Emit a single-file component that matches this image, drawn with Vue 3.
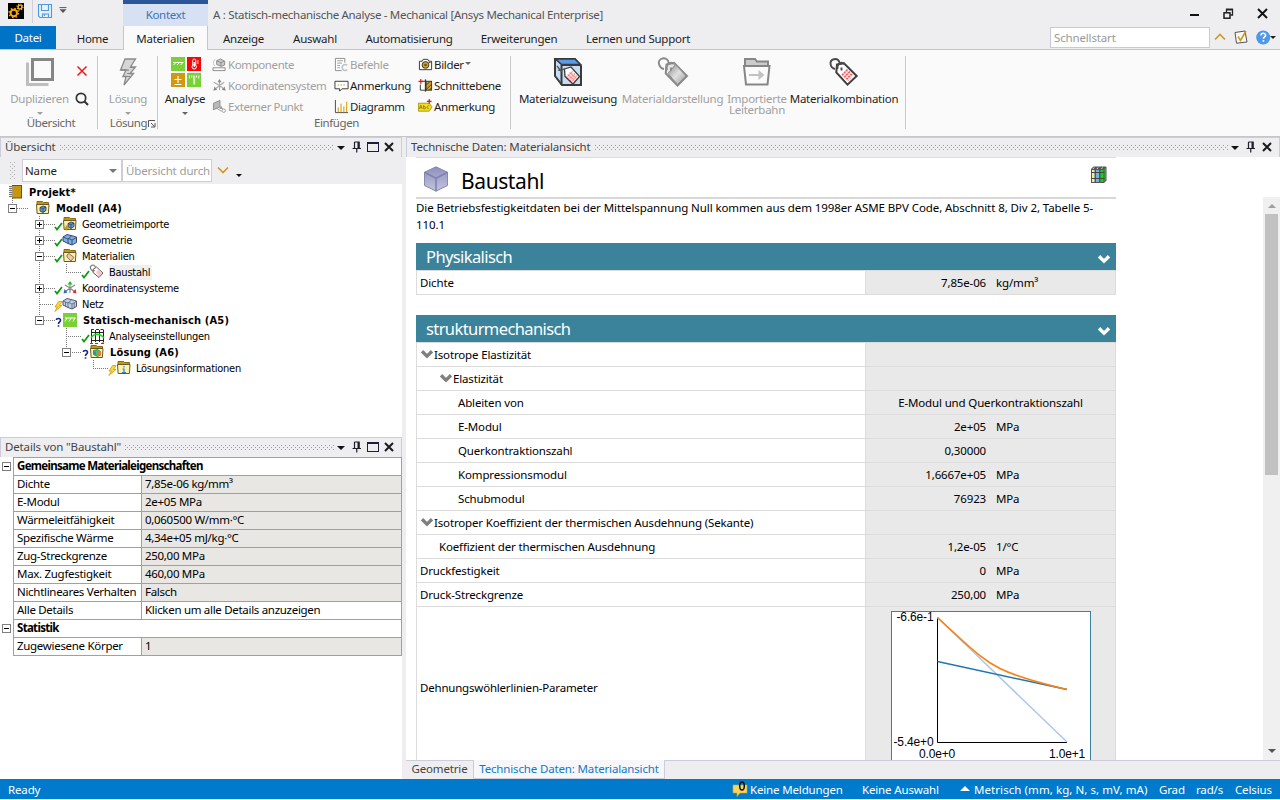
<script setup>
const ribbonTabs = [
  { text: 'Home', cls: 't-home' },
  { text: 'Materialien', cls: 't-mat' },
  { text: 'Anzeige', cls: 't-anz' },
  { text: 'Auswahl', cls: 't-aus' },
  { text: 'Automatisierung', cls: 't-auto' },
  { text: 'Erweiterungen', cls: 't-erw' },
  { text: 'Lernen und Support', cls: 't-ler' },
]

const insertColumns = [
  {
    cls: 'c1',
    items: [
      { text: 'Komponente', icon: 'i-comp', off: true },
      { text: 'Koordinatensystem', icon: 'i-axes-grey', off: true },
      { text: 'Externer Punkt', icon: 'i-point', off: true },
    ],
  },
  {
    cls: 'c2',
    items: [
      { text: 'Befehle', icon: 'i-cmd', off: true },
      { text: 'Anmerkung', icon: 'i-note' },
      { text: 'Diagramm', icon: 'i-chart' },
    ],
  },
  {
    cls: 'c3',
    items: [
      { text: 'Bilder', icon: 'i-cam', arrow: true },
      { text: 'Schnittebene', icon: 'i-section' },
      { text: 'Anmerkung', icon: 'i-label' },
    ],
  },
]

const materialButtons = [
  { text: 'Materialzuweisung', icon: 'i-assign', cls: 'm1' },
  { text: 'Materialdarstellung', icon: 'i-tag-grey', off: true, cls: 'm2' },
  { text: 'Importierte\nLeiterbahn', icon: 'i-import', off: true, cls: 'm3' },
  { text: 'Materialkombination', icon: 'i-tag', cls: 'm4' },
]

const tree = [
  { text: 'Projekt*', level: 0, icon: 'i-project', bold: true },
  { text: 'Modell (A4)', level: 1, box: '-', icon: 'i-f-model', bold: true },
  { text: 'Geometrieimporte', level: 2, box: '+', status: 's-check', icon: 'i-f-import' },
  { text: 'Geometrie', level: 2, box: '+', status: 's-check', icon: 'i-geom' },
  { text: 'Materialien', level: 2, box: '-', status: 's-check', icon: 'i-f-mat' },
  { text: 'Baustahl', level: 3, status: 's-check', icon: 'i-pinktag', selected: true },
  { text: 'Koordinatensysteme', level: 2, box: '+', status: 's-check', icon: 'i-axes' },
  { text: 'Netz', level: 2, status: 's-bolt', icon: 'i-mesh' },
  { text: 'Statisch-mechanisch (A5)', level: 2, box: '-', status: 's-quest', icon: 'i-static', bold: true },
  { text: 'Analyseeinstellungen', level: 3, status: 's-check', icon: 'i-settings' },
  { text: 'Lösung (A6)', level: 3, box: '-', status: 's-quest', icon: 'i-f-sol', bold: true },
  { text: 'Lösungsinformationen', level: 4, status: 's-bolt', icon: 'i-f-info' },
]

const details = [
  { head: 'Gemeinsame Materialeigenschaften' },
  { name: 'Dichte', value: '7,85e-06 kg/mm³' },
  { name: 'E-Modul', value: '2e+05 MPa' },
  { name: 'Wärmeleitfähigkeit', value: '0,060500 W/mm·°C' },
  { name: 'Spezifische Wärme', value: '4,34e+05 mJ/kg·°C' },
  { name: 'Zug-Streckgrenze', value: '250,00 MPa' },
  { name: 'Max. Zugfestigkeit', value: '460,00 MPa' },
  { name: 'Nichtlineares Verhalten', value: 'Falsch' },
  { name: 'Alle Details', value: 'Klicken um alle Details anzuzeigen', editable: true },
  { head: 'Statistik' },
  { name: 'Zugewiesene Körper', value: '1' },
]

const props = [
  { name: 'Isotrope Elastizität', d: 0, open: true },
  { name: 'Elastizität', d: 1, open: true },
  { name: 'Ableiten von', d: 2, full: 'E-Modul und Querkontraktionszahl' },
  { name: 'E-Modul', d: 2, num: '2e+05', unit: 'MPa' },
  { name: 'Querkontraktionszahl', d: 2, num: '0,30000' },
  { name: 'Kompressionsmodul', d: 2, num: '1,6667e+05', unit: 'MPa' },
  { name: 'Schubmodul', d: 2, num: '76923', unit: 'MPa' },
  { name: 'Isotroper Koeffizient der thermischen Ausdehnung (Sekante)', d: 0, open: true },
  { name: 'Koeffizient der thermischen Ausdehnung', d: 1, num: '1,2e-05', unit: '1/°C' },
  { name: 'Druckfestigkeit', d: 0, num: '0', unit: 'MPa' },
  { name: 'Druck-Streckgrenze', d: 0, num: '250,00', unit: 'MPa' },
]
</script>

<template>
  <div class="app">
    <svg class="defs" width="0" height="0">
      <defs>
        <linearGradient id="g-cube" x1="0" y1="0" x2="0" y2="1">
          <stop offset="0" stop-color="#8d90bd" /><stop offset="1" stop-color="#c3c5dc" />
        </linearGradient>
        <linearGradient id="g-grey" x1="0" y1="0" x2="1" y2="1">
          <stop offset="0" stop-color="#8a8a8a" /><stop offset="0.5" stop-color="#e0e0e0" /><stop offset="1" stop-color="#999" />
        </linearGradient>
        <symbol id="folder" viewBox="0 0 16 16">
          <path d="M2 5V1.500h5.500l1 1H13.500V5z" fill="#c8960c" stroke="#8a6a10" />
          <path d="M1.500 4.500h12.500l-.6 9H2.100z" fill="#fbf3a8" stroke="#6b5a20" />
        </symbol>
        <symbol id="cube-s" viewBox="0 0 8 8">
          <path d="M1 2.500l3-1.500 3 1v3.500l-3 2-3-1.500z" fill="#5b9be8" stroke="#333" stroke-width=".8" />
          <path d="M1 2.500l3 1 3-1.500M4 3.500v4" fill="none" stroke="#333" stroke-width=".7" />
        </symbol>
        <symbol id="i-project" viewBox="0 0 16 16">
          <rect x="4.500" y="1.500" width="9" height="12.500" fill="#c8960c" stroke="#6b5410" />
          <rect x="1.500" y="2" width="3" height="11.500" fill="#ddd" />
          <path d="M1 2.500h3M1 4.500h3M1 6.500h3M1 8.500h3M1 10.500h3M1 12.500h3" stroke="#777" stroke-width="1" />
        </symbol>
        <symbol id="i-f-model" viewBox="0 0 16 16"><use href="#folder" /><use href="#cube-s" x="4" y="5" width="8" height="8" /></symbol>
        <symbol id="i-f-import" viewBox="0 0 16 16"><use href="#folder" /><use href="#cube-s" x="5" y="5" width="8" height="8" /><path d="M2 12h5M4.500 9.500v5" stroke="#c8960c" stroke-width="1.500" /></symbol>
        <symbol id="i-geom" viewBox="0 0 16 16">
          <path d="M1 5l4-2.500 4 1L14.500 5v5.500L10 13l-4-1.500L1 9z" fill="#79aef0" stroke="#3a4a60" />
          <path d="M1 5l5 2 3.500-3M6 7v4.500M6.500 6.500l3.500 1.500 4.500-2.500M10 8v5" fill="none" stroke="#3a4a60" stroke-width=".9" />
        </symbol>
        <symbol id="i-mesh" viewBox="0 0 16 16">
          <path d="M1 5l4-2.500 4 1L14.500 5v5.500L10 13l-4-1.500L1 9z" fill="#b9d0ea" stroke="#556" />
          <path d="M1 5l5 2 3.500-3M6 7v4.500M6.500 6.500l3.500 1.500 4.500-2.500M10 8v5M3.500 6v4M12.200 7v4.800" fill="none" stroke="#556" stroke-width=".7" />
        </symbol>
        <symbol id="i-f-mat" viewBox="0 0 16 16"><use href="#folder" /><path d="M5 7l2-1.500 5 4-3 3.500-4-4z" fill="#f5c9a0" stroke="#7a6a60" stroke-width=".9" /></symbol>
        <symbol id="i-pinktag" viewBox="0 0 16 16">
          <path d="M4 5.500l3.500-2.500 6.500 6-4 4.500-6-5z" fill="#fff" stroke="#555" />
          <path d="M7 8l3-2.500 3.500 3.500-3.500 3.500z" fill="#f8c4c4" />
          <path d="M6 6.500C3 8 0 4 2 2s4-.5 4.500 1.500" fill="none" stroke="#777" stroke-width="1.100" />
        </symbol>
        <symbol id="i-axes" viewBox="0 0 16 16">
          <path d="M8 8V3M8 8l5 4M8 8l-5 4M8 8l5-3M8 8L3 5M8 8v5" stroke="#888" stroke-width="1.200" />
          <path d="M5.500 4.500L8 1l2.500 3.500z" fill="#12c912" /><path d="M14.500 13.500l-1-4.500-3 3.500z" fill="#e22" /><path d="M1.500 13.500l1-4.500 3 3.500z" fill="#36c" />
        </symbol>
        <symbol id="i-axes-grey" viewBox="0 0 16 16">
          <path d="M8 8V3M8 8l5 4M8 8l-5 4M8 8l5-3.500M8 8L2 4.500M8 8v5" stroke="#aaa" stroke-width="1.200" />
          <path d="M5.800 4.500L8 1l2.200 3.500zM14.500 13.500l-1-4.500-3 3.500zM1.500 13.500l1-4.500 3 3.500z" fill="#8a8a8a" />
        </symbol>
        <symbol id="i-static" viewBox="0 0 16 16">
          <rect x="1" y="1" width="14" height="14" fill="#7ad137" />
          <path d="M3 6h10.500M3 9.500l2-3.500M7 9.500l2-3.500M11 9.500l2-3.500" stroke="#fff" stroke-width="1" fill="none" />
        </symbol>
        <symbol id="i-settings" viewBox="0 0 16 16">
          <path d="M2.500 2v12M6.500 2v12M10.500 2v12M14.500 2v12M2 4.500h13M2 12.500h13" stroke="#222" stroke-width="1" />
          <path d="M2 10c3-5 9-5 13 0" fill="none" stroke="#1d1" stroke-width="1.300" />
          <path d="M2 1.500h3M7 1.500h3M11.500 1.500h3" stroke="#22d" /><path d="M1 15.500h3M6 15.500h3M12 15.500h3M2.500 14v2M14 14v2" stroke="#e11" />
        </symbol>
        <symbol id="i-f-sol" viewBox="0 0 16 16"><use href="#folder" /><path d="M4.500 6.500l4-1 3 2v3.500l-3 1.500-4-2z" fill="#3c6" stroke="#364" stroke-width=".7" /><path d="M9 7l3 .5v3.500L9 12z" fill="#e73" /><path d="M5 7l2 1v3L5 10z" fill="#38d" /></symbol>
        <symbol id="i-f-info" viewBox="0 0 16 16"><use href="#folder" /><path d="M8 6v1.500M6.500 9H8v3.500M6 12.500h4" stroke="#2b7fd8" stroke-width="1.200" fill="none" /></symbol>
        <symbol id="s-check" viewBox="0 0 9 9"><path d="M1 5l2 2.500L8 1" fill="none" stroke="#0b9a0b" stroke-width="1.700" /></symbol>
        <symbol id="s-bolt" viewBox="0 0 9 11"><path d="M4.500.5L1 6h2.500L.8 10.500 8 4.500H5.500L8 .5z" fill="#ffd83a" stroke="#c99a10" stroke-width=".8" /></symbol>
        <symbol id="s-quest" viewBox="0 0 9 11"><path d="M2.300 3C2.500 1 6.500 1 6.500 3.300 6.500 5 4.500 4.800 4.500 7M4.500 8.300v1.500" fill="none" stroke="#112a8c" stroke-width="1.600" /></symbol>

        <symbol id="i-comp" viewBox="0 0 16 16">
          <path d="M1 11.500h13v3H1z" fill="#fff" stroke="#8a8a8a" /><path d="M5 4l4-2 4.500 2.500v4L10 10 5 8z" fill="#ccc" stroke="#8a8a8a" /><path d="M5 4l4.500 2 4-1.500M9.500 6v4" fill="none" stroke="#8a8a8a" /><path d="M3.500 2.500C1 4 1 8 3 9.500" fill="none" stroke="#aaa" stroke-dasharray="2 1" />
        </symbol>
        <symbol id="i-point" viewBox="0 0 16 16">
          <path d="M1.500 4.500l7-3v7l-7 3z" fill="#b9b9b9" stroke="#8a8a8a" /><path d="M5 10c2 1 3 2 5 3" stroke="#999" fill="none" /><path d="M9.500 7l2.500 4-4-.5z" fill="#999" /><circle cx="12.500" cy="12.500" r="1.800" fill="#fff" stroke="#999" />
        </symbol>
        <symbol id="i-cmd" viewBox="0 0 16 16">
          <path d="M8 14.500H1.500v-13h10V6" fill="#fff" stroke="#8a8a8a" /><path d="M3.500 4h6M3.500 6.500h5M3.500 9h3M3.500 11.500h3" stroke="#999" /><path d="M14 8.800c-2-1.500-5.300-.8-5.300 2.400s3.500 4 5.300 2.200" fill="none" stroke="#c2c2c2" stroke-width="1.800" />
        </symbol>
        <symbol id="i-note" viewBox="0 0 16 16"><path d="M1 3.500h14v8H8.500L6 14v-2.500H1z" fill="#fff" stroke="#333" /><path d="M4 7.500h1.500M7 7.500h1.500M10 7.500h1.500" stroke="#c8960c" /></symbol>
        <symbol id="i-chart" viewBox="0 0 16 16"><path d="M1.500 1v13.500H15" fill="none" stroke="#444" /><path d="M4.500 9v5M7.500 5v9M10.500 8v6M13.500 3v11" stroke="#d9a414" stroke-width="1.200" /></symbol>
        <symbol id="i-cam" viewBox="0 0 16 16"><path d="M1.500 4.500h3l1-2h5l1 2h3v9h-13z" fill="#fff" stroke="#333" /><circle cx="8" cy="8.500" r="3.600" fill="#d9a21b" stroke="#333" /><circle cx="8" cy="8.500" r="1.400" fill="#6b5410" /><path d="M11.500 6h2" stroke="#333" /></symbol>
        <symbol id="i-section" viewBox="0 0 16 16"><path d="M4 3.500h4v9.500H2.500V7" fill="#fff" stroke="#333" /><rect x="8.500" y="3.500" width="6" height="9.500" fill="#d9a21b" stroke="#333" /><path d="M8.500 8l4.500-4.500M8.500 12.500l6-6M12 13l2.500-2.500" stroke="#333" stroke-width="1" /><path d="M8 1.500v13" stroke="#333" stroke-width="1.400" /><path d="M.5 3.500h5M3 1v5" stroke="#e11" stroke-width="1.300" /></symbol>
        <symbol id="i-label" viewBox="0 0 16 16"><path d="M.5 4.500H12l3 4-3 4.500H.5z" fill="#f3dc22" stroke="#b09a10" /><path d="M1.500 10.500L3 6.500l1.500 4M2 9.300h2M6 6.500v4h1.500a1.200 1.200 0 000-2.300H6M12 7.500c-2.500-1-3 3-.5 3" fill="none" stroke="#8a7a10" stroke-width=".9" /><path d="M9.500 2.500h5M12 0v5" stroke="#e11" stroke-width="1.300" /></symbol>
        <symbol id="i-assign" viewBox="0 0 32 32">
          <path d="M3 3h20l6 7v19H10L3 20z" fill="#c6ddfa" stroke="#3a3a3a" stroke-width="2" />
          <path d="M3.500 3h19.500l5.500 5.500H9.500z" fill="#5b9be8" stroke="#3a3a3a" stroke-width="1.600" />
          <path d="M9.500 9h19M9.500 9v20" stroke="#3a3a3a" stroke-width="2" />
          <path d="M12.500 13l6.500-2 8.500 9.500-6.500 7.500-8-7.500z" fill="#fff" stroke="#3a3a3a" stroke-width="1.300" />
          <path d="M14.500 20l5-5 6 6-5 5.500z" fill="#fbd4d4" /><path d="M16 18.500l6 6M18 16.500l6 6M14.500 20.500l5.500 5.500M20.500 15.500l-5.500 5.500M23 17.500l-6 6M25 19.500l-5.500 6" stroke="#ee5a5a" stroke-dasharray="1.400 1.200" stroke-width="1" />
          <path d="M5 10l5 6M6 14c3 1 5-1 7-1" fill="none" stroke="#555" stroke-width="1.300" />
        </symbol>
        <symbol id="i-tag" viewBox="0 0 32 32">
          <path d="M9 8.500L16 7.300 28.700 20l-9.200 8.700L8.300 16.500z" fill="#fff" stroke="#3e3e3e" stroke-width="2" />
          <path d="M13 19l6-6.500 6.500 7-6 6z" fill="#fde0e0" /><path d="M14 18l6.500 6.500M16 16l6.500 6.500M18 14l6 6M19.500 13.500l-5.500 6M22 15.500l-6 6M24 18l-6 6" stroke="#ee5a5a" stroke-dasharray="1.700 1.200" stroke-width="1.200" />
          <path d="M7 13C2 12 1 5 5 3.500c4-1.500 7 1 6.500 4.500M9.500 13c-1-5 4-8 7-5M13.500 11.500v3" fill="none" stroke="#4a4a4a" stroke-width="1.900" />
        </symbol>
        <symbol id="i-tag-grey" viewBox="0 0 32 32">
          <path d="M9.500 8.500L17 6.800 30 20l-9.500 9.500L8.700 17.500z" fill="#e6e6e6" stroke="#8a8a8a" stroke-width="2" />
          <path d="M11 17.500l7.500-9L29 20l-8.500 8.500z" fill="url(#g-grey)" stroke="#8a8a8a" stroke-width="1" />
          <path d="M7 13C2 12 0 5 4 3c4-2 8 .5 7.500 4.500M10 14c-2-6 4-9 7-6M14 11.500v3" fill="none" stroke="#8a8a8a" stroke-width="1.900" />
        </symbol>
        <symbol id="i-import" viewBox="0 0 32 32">
          <path d="M4 10V3h10l2 2.500h11V10z" fill="#cbcbcb" stroke="#868686" stroke-width="2" />
          <path d="M3 10h25.500l-2 18.500H5z" fill="#fbfbfb" stroke="#868686" stroke-width="2" />
          <path d="M8 18h9.500v-4l6 5-6 5v-4H8z" fill="#c2c2c2" />
        </symbol>
        <symbol id="chev" viewBox="0 0 12 9"><path d="M1.500 2L6 6.500 10.500 2" fill="none" stroke="currentColor" stroke-width="3" /></symbol>
        <symbol id="pin" viewBox="0 0 10 12"><path d="M2.500 1h4.500v6M2.500 1v6M.5 7.500h8.500M4.750 7.500V11.500" fill="none" stroke="#1e1e2c" stroke-width="1.200" /><path d="M6.500 1v6.500" stroke="#1e1e2c" stroke-width="2" /></symbol>
        <symbol id="closex" viewBox="0 0 10 10"><path d="M1 1l8 8M9 1L1 9" stroke="#1a1a1a" stroke-width="2" /></symbol>
      </defs>
    </svg>

    <!-- title bar -->
    <header class="titlebar">
      <div class="quick">
        <svg class="logo" width="16" height="16" viewBox="0 0 16 16">
          <rect width="16" height="16" fill="#000" />
          <circle cx="5.800" cy="10" r="3.200" fill="none" stroke="#f7a800" stroke-width="2" />
          <circle cx="5.800" cy="10" r="4.700" fill="none" stroke="#f7a800" stroke-width="1.400" stroke-dasharray="1.600 2.090" />
          <circle cx="12" cy="4" r="1.900" fill="none" stroke="#f7b030" stroke-width="1.400" />
          <circle cx="12" cy="4" r="3" fill="none" stroke="#f7b030" stroke-width="1.100" stroke-dasharray="1.200 1.160" />
        </svg>
        <i class="qsep"></i>
        <svg width="14" height="14" viewBox="0 0 14 14"><path d="M.5.500h13v13H2l-1.500-1.500zM3.500.500v6h7v-6M4.500 13.500v-3.500h6v3.500M6.500 10v2" fill="none" stroke="#4a9be8" stroke-width="1.100" /></svg>
        <svg class="qarrow" width="8" height="6" viewBox="0 0 8 6"><path d="M.5.600h7" stroke="#555" /><path d="M.5 2.200h7L4 6z" fill="#555" /></svg>
      </div>
      <div class="context">Kontext</div>
      <div class="title">A : Statisch-mechanische Analyse - Mechanical [Ansys Mechanical Enterprise]</div>
      <div class="winctl">
        <svg width="10" height="12" viewBox="0 0 10 12"><path d="M0 7h9" stroke="#111" stroke-width="2" /></svg>
        <svg width="12" height="12" viewBox="0 0 12 12"><path d="M3.500 4V1.500h6v5.500H7.500" fill="none" stroke="#222" stroke-width="1.300" /><path d="M3 1.500h7" stroke="#222" stroke-width="1.600" /><rect x="1" y="4.800" width="6" height="5.400" fill="#eeeef0" stroke="#111" stroke-width="1.400" /></svg>
        <svg class="wx" width="11" height="11" viewBox="0 0 11 11"><path d="M1 1l9 9M10 1l-9 9" stroke="#111" stroke-width="1.900" /></svg>
      </div>
    </header>

    <!-- ribbon tabs -->
    <nav class="tabs">
      <div class="tab file">Datei</div>
      <div v-for="t in ribbonTabs" :key="t.text" class="tab" :class="t.cls">{{ t.text }}</div>
      <div class="search">Schnellstart</div>
      <svg class="up" width="12" height="8" viewBox="0 0 12 8"><path d="M1 6.500L6 1.500l5 5" fill="none" stroke="#d09a20" stroke-width="1.600" /></svg>
      <svg class="chk" width="14" height="14" viewBox="0 0 14 14"><path d="M1 2.500l10-1.500 2 11-10.500 1.200z" fill="#f7f7f7" stroke="#555" /><path d="M4 6.500l2.500 4L12 1" fill="none" stroke="#d09a20" stroke-width="1.600" /></svg>
      <svg class="help" width="20" height="15" viewBox="0 0 20 15"><circle cx="7.200" cy="7.500" r="7" fill="#4d98ea" /><path d="M5 5.500c0-3 4.600-2.800 4.600-.3 0 1.700-2.200 1.600-2.200 3.600M7.400 10v1.700" fill="none" stroke="#fff" stroke-width="1.600" /><path d="M14 6h6l-3 3z" fill="#222" /></svg>
    </nav>

    <!-- ribbon -->
    <section class="ribbon">
      <div class="group g1">
        <div class="big off dup">
          <svg width="28" height="28" viewBox="0 0 28 28"><path d="M1.500 4.500v22h21" fill="none" stroke="#bdbdbd" stroke-width="3" /><rect x="6.500" y="1.500" width="20" height="20" fill="none" stroke="#868686" stroke-width="3" /></svg>
          <span>Duplizieren</span><i class="drop"></i>
        </div>
        <div class="side">
          <svg width="12" height="12" viewBox="0 0 12 12"><path d="M1.500 1.500l9 9M10.500 1.500l-9 9" stroke="#f01818" stroke-width="1.500" /></svg>
          <svg width="14" height="14" viewBox="0 0 14 14"><circle cx="6" cy="6" r="4.700" fill="none" stroke="#333" stroke-width="1.700" /><path d="M9.300 9.300L13 13" stroke="#333" stroke-width="2" /></svg>
        </div>
        <div class="glabel">Übersicht</div>
      </div>
      <div class="group g2">
        <div class="big off">
          <svg width="18" height="28" viewBox="0 0 18 28"><path d="M6 1h10.500l-5 8h5L11 15.500h3.500L5 27l2-8.500H4L7 12H1.500z" fill="#d6d6d6" stroke="#8a8a8a" stroke-width="1.300" /><path d="M3.500 18.500H11M2 12.200h8M11 9.500h5M8 15.500h6" stroke="#8a8a8a" stroke-width="1.200" /></svg>
          <span>Lösung</span><i class="drop"></i>
        </div>
        <div class="glabel">Lösung<svg width="8" height="8" viewBox="0 0 8 8"><path d="M.5 7V.500H7M3 3l3.500 3.500M7 3v4H3" fill="none" stroke="#555" /></svg></div>
      </div>
      <div class="group g3">
        <div class="big ana">
          <svg width="30" height="30" viewBox="0 0 30 30">
            <rect width="14" height="14" fill="#7ad137" /><rect x="16" width="14" height="14" fill="#f20808" /><rect y="16" width="14" height="14" fill="#cf9a10" /><rect x="16" y="16" width="14" height="14" fill="#7ad137" />
            <path d="M2 5.500h10.500M2.500 8l2-2M6 8l2-2M9.500 8l2-2" stroke="#fff" />
            <path d="M21.700 8V3.500a1.500 1.500 0 013 0V8M25.700 4h2M25.700 6h2" stroke="#fff" fill="none" stroke-width=".9" /><circle cx="23.200" cy="9.800" r="2.200" fill="none" stroke="#fff" /><path d="M23.200 5v5" stroke="#fff" stroke-width="1.300" />
            <path d="M3.500 22.500h7M7 19v7M3.500 27.500h7" stroke="#fff" stroke-width="1.100" />
            <path d="M18.500 18.500v3M20.800 18.500v2M25.500 18.500v2M27.800 18.500v3" stroke="#fff" /><path d="M23.200 18.500v9" stroke="#d5f2bb" stroke-width="2" />
          </svg>
          <span>Analyse</span><i class="drop dark"></i>
        </div>
        <div v-for="c in insertColumns" :key="c.cls" class="col" :class="c.cls">
          <div v-for="it in c.items" :key="it.text" class="small" :class="{ off: it.off }">
            <svg width="15" height="15"><use :href="'#' + it.icon" /></svg><span>{{ it.text }}</span><i v-if="it.arrow" class="drop dark"></i>
          </div>
        </div>
        <div class="glabel">Einfügen</div>
      </div>
      <div class="group g4">
        <div v-for="m in materialButtons" :key="m.icon" class="big" :class="[m.cls, { off: m.off }]">
          <svg width="32" height="32"><use :href="'#' + m.icon" /></svg>
          <span>{{ m.text }}</span>
        </div>
      </div>
    </section>

    <main class="work">
      <div class="left">
        <section class="panel outline">
          <div class="phead"><span>Übersicht</span><i class="grip"></i><i class="ptri"></i>
            <svg class="pin" width="10" height="12"><use href="#pin" /></svg><i class="pmax"></i><svg class="px" width="10" height="10"><use href="#closex" /></svg></div>
          <div class="ptool">
            <i class="vgrip"></i>
            <div class="combo"><span>Name</span><i></i></div>
            <div class="filter">Übersicht durch</div>
            <svg class="gold" width="12" height="8" viewBox="0 0 12 8"><path d="M1 1.500l5 5 5-5" fill="none" stroke="#d09a20" stroke-width="1.700" /></svg>
            <i class="more"></i>
          </div>
          <div class="tree">
            <svg class="lines" width="120" height="192" viewBox="0 0 120 192">
              <g stroke="#777" stroke-dasharray="1 1" fill="none">
                <path d="M12.500 14v6M17 24.500h11M39.500 32v104M44 40.500h11M44 56.500h11M44 72.500h11M66.500 80v8M66 88.500h16M44 104.500h11M40 120.500h14M44 136.500h11M66.500 144v24M66 152.500h16M72 168.500h10M93.500 176v8M93 184.500h15" />
              </g>
            </svg>
            <div v-for="n in tree" :key="n.text" class="node" :class="['lv' + n.level, { bold: n.bold }]">
              <i v-if="n.level" class="box"><svg v-if="n.box" width="9" height="9" viewBox="0 0 9 9"><rect x=".5" y=".5" width="8" height="8" fill="#fff" stroke="#808080" /><path :d="n.box === '+' ? 'M2 4.500h5M4.500 2v5' : 'M2 4.500h5'" stroke="#000" /></svg></i>
              <svg v-if="n.level" class="stat" width="9" height="11"><use v-if="n.status" :href="'#' + n.status" /></svg>
              <svg class="nicon" width="16" height="16"><use :href="'#' + n.icon" /></svg>
              <span :class="{ sel: n.selected }">{{ n.text }}</span>
            </div>
          </div>
        </section>

        <section class="panel det">
          <div class="phead"><span>Details von "Baustahl"</span><i class="grip"></i><i class="ptri"></i>
            <svg class="pin" width="10" height="12"><use href="#pin" /></svg><i class="pmax"></i><svg class="px" width="10" height="10"><use href="#closex" /></svg></div>
          <div class="grid">
            <div v-for="(r, i) in details" :key="i" class="drow">
              <div class="gut"><svg v-if="r.head" width="9" height="9" viewBox="0 0 9 9"><rect x=".5" y=".5" width="8" height="8" fill="#fff" stroke="#808080" /><path d="M2 4.500h5" stroke="#000" /></svg></div>
              <div v-if="r.head" class="dh">{{ r.head }}</div>
              <template v-else>
                <div class="dn">{{ r.name }}</div>
                <div class="dv" :class="{ edit: r.editable }">{{ r.value }}</div>
              </template>
            </div>
          </div>
        </section>
      </div>

      <div class="right">
        <div class="phead"><span>Technische Daten: Materialansicht</span><i class="grip"></i><i class="ptri"></i>
          <svg class="pin" width="10" height="12"><use href="#pin" /></svg><svg class="px" width="10" height="10"><use href="#closex" /></svg></div>
        <div class="view">
          <div class="doc">
            <div class="dochead">
              <svg width="26" height="26" viewBox="0 0 26 26"><path d="M13 .8l11.500 5.400v13.300L13 25.200 1.500 19.500V6.200z" fill="url(#g-cube)" stroke="#8689b4" /><path d="M1.500 6.200L13 12.300l11.500-6.100M13 12.300v13" fill="none" stroke="#7f83b0" stroke-width="1.600" /></svg>
              <h1>Baustahl</h1>
              <svg class="lib" width="17" height="19" viewBox="0 0 17 19"><path d="M1 4l2.500-2.500H15.500l1 .5v13.500L14 18H1z" fill="#555" /><path d="M2 5h2.500v12H2z" fill="#f0eea0" /><path d="M6 5h3v12H6z" fill="#6ab6e6" /><path d="M10.500 5h3v12h-3zM14.500 4l1.200-1.500v12l-1.200 2z" fill="#14d314" /><path d="M3 4l1-1.500M7 4l1-1.500M11.500 4l1-1.500" stroke="#ddd" /><path d="M1 7.500h13.500M1 13.500h13.500" stroke="#444" stroke-width="1.200" /></svg>
            </div>
            <p>Die Betriebsfestigkeitdaten bei der Mittelspannung Null kommen aus dem 1998er ASME BPV Code, Abschnitt 8, Div 2, Tabelle 5-<br />110.1</p>
            <h2>Physikalisch<svg width="14" height="10"><use href="#chev" /></svg></h2>
            <div class="rows">
              <div class="row"><div class="pn">Dichte</div><div class="pv"><b>7,85e-06</b><em>kg/mm³</em></div></div>
            </div>
            <h2 class="second">strukturmechanisch<svg width="14" height="10"><use href="#chev" /></svg></h2>
            <div class="rows">
              <div v-for="p in props" :key="p.name + p.num" class="row">
                <div class="pn" :class="'d' + p.d"><svg v-if="p.open" width="14" height="10"><use href="#chev" /></svg>{{ p.name }}</div>
                <div class="pv"><strong v-if="p.full">{{ p.full }}</strong><template v-else><b>{{ p.num }}</b><em>{{ p.unit }}</em></template></div>
              </div>
              <div class="row tall">
                <div class="pn">Dehnungswöhlerlinien-Parameter</div>
                <div class="pv">
                  <svg class="plot" width="200" height="160" viewBox="0 0 200 160">
                    <rect x=".5" y=".5" width="199" height="159" fill="#fff" stroke="#3b829b" />
                    <path d="M46.500 7v124.500H176" fill="none" stroke="#000" />
                    <path d="M46.500 6.500L176 131" fill="none" stroke="#aec7e8" stroke-width="1.500" />
                    <path d="M46.500 50.500L176 78.500" fill="none" stroke="#1f77b4" stroke-width="1.500" />
                    <path d="M46.500 6.500L68 26.500C84 41 95 50.500 109 57.500S142 70.500 176 78.500" fill="none" stroke="#ff7f0e" stroke-width="1.700" />
                    <g font-family="Liberation Sans, Arial, sans-serif" font-size="12">
                      <text x="42.500" y="10" text-anchor="end">-6.6e-1</text><text x="42.500" y="135" text-anchor="end">-5.4e+0</text>
                      <text x="46" y="147" text-anchor="middle">0.0e+0</text><text x="176" y="147" text-anchor="middle">1.0e+1</text>
                    </g>
                  </svg>
                </div>
              </div>
            </div>
          </div>
          <div class="scroll"><i class="su"></i><i class="thumb"></i><i class="sd"></i></div>
        </div>
        <div class="btabs"><div class="bt">Geometrie</div><div class="bt on">Technische Daten: Materialansicht</div></div>
      </div>
    </main>

    <footer class="status">
      <span class="ready">Ready</span>
      <svg class="bubble" width="17" height="16" viewBox="0 0 17 16"><path d="M1 4h14v8H8l-3 3.500V12H1z" fill="#f8d45c" stroke="#caa42c" stroke-width=".6" /><ellipse cx="10" cy="5" rx="2.300" ry="4" fill="none" stroke="#111" stroke-width="1.500" /></svg>
      <span class="k1">Keine Meldungen</span>
      <span class="k2">Keine Auswahl</span>
      <i class="tri"></i>
      <span class="k3">Metrisch (mm, kg, N, s, mV, mA)</span>
      <span class="k4">Grad</span><span class="k5">rad/s</span><span class="k6">Celsius</span>
    </footer>
  </div>
</template>

<style>
html, body { margin: 0; background: #fff; }
body { overflow: hidden; }
</style>

<style scoped>
* { box-sizing: border-box; }
.app { width: 1280px; height: 800px; display: flex; flex-direction: column; overflow: hidden; background: #fff; color: #1e1e1e; font-family: "Noto Sans", "Open Sans", sans-serif; font-size: 11.5px; letter-spacing: -0.15px; white-space: nowrap; }
.defs { position: absolute; }
svg { display: block; flex: none; overflow: visible; }
i { display: block; flex: none; font-style: normal; }

.titlebar { height: 26px; flex: none; display: flex; background: #eeeef0; }
.quick { width: 123px; flex: none; display: flex; padding-left: 8px; align-items: flex-start; }
.qsep { width: 1px; height: 23px; background: #d0d0d8; margin: 0 5px 0 8px; }
.quick svg + svg { margin-left: 7px; }
.quick svg { margin-top: 4px; }
.quick .logo { margin-top: 3px; }
.quick .qarrow { margin-top: 7px; }
.context { width: 85px; flex: none; background: #d6e1f3; border-top: 4px solid #2b579a; color: #4073b8; text-align: center; line-height: 22px; letter-spacing: -0.3px; }
.title { margin-left: 5px; line-height: 30px; color: #555; flex: 1; letter-spacing: -0.31px; }
.winctl { display: flex; gap: 23px; padding: 8px 12px 0 0; }
.winctl .wx { margin-left: -1px; }

.tabs { height: 24px; flex: none; display: flex; background: #eeeef0; box-shadow: inset 0 -1px #c6c6c8; }
.tab { line-height: 25px; text-align: center; flex: none; color: #1e1e1e; letter-spacing: -0.25px; }
.tab.file { width: 56px; height: 23px; background: #0173c7; color: #fff; line-height: 24px; }
.t-home { width: 67px; margin-left: 3px; }
.t-mat { width: 85px; height: 24px; margin-left: -3px; background: #fafafa; border: 1px solid #c6c6c8; border-width: 0 1px; }
.t-anz { width: 71px; } .t-aus { width: 72px; } .t-auto { width: 116px; } .t-erw { width: 104px; } .t-ler { width: 134px; }
.search { width: 160px; height: 21px; margin: 1px 0 0 auto; background: #fff; border: 1px solid #c9c9dc; color: #999; padding-left: 3px; line-height: 20px; }
.up { margin: 7px 0 0 4px; } .chk { margin: 4px 0 0 8px; } .help { margin: 4px 4px 0 8px; }

.ribbon { height: 86px; flex: none; display: flex; background: #fafafa; }
.group { position: relative; flex: none; display: flex; }
.group::after { content: ""; position: absolute; right: 0; top: 6px; width: 1px; height: 73px; background: #c8c8ca; }
.g1 { width: 98px; } .g2 { width: 60px; } .g3 { width: 353px; } .g4 { width: 395px; }
.glabel { position: absolute; left: 0; right: 0; bottom: 5px; height: 17px; line-height: 17px; text-align: center; color: #666; padding-left: 4px; letter-spacing: -0.4px; }
.g2 .glabel { display: flex; justify-content: center; align-items: center; padding-left: 10px; } .g2 .glabel svg { margin: 3px 0 0 1px; }
.big { display: flex; flex-direction: column; align-items: center; padding-top: 8px; flex: none; letter-spacing: -0.25px; }
.big svg { margin-bottom: 7px; }
.big span { line-height: 12px; white-space: pre-line; text-align: center; }
.off { color: #a0a0a0; }
.drop { width: 0; height: 0; border: 3px solid transparent; border-top-color: #a0a0a0; border-bottom: 0; margin-top: 7px; }
.drop.dark { border-top-color: #666; }
.dup { width: 74px; padding-left: 5px; }
.side { padding-top: 15px; padding-left: 1px; display: flex; flex-direction: column; gap: 15px; align-items: center; }
.g2 .big { width: 60px; }
.ana { width: 54px; color: #1e1e1e; padding-top: 7px; letter-spacing: -0.15px; } .ana svg { margin-bottom: 6px; margin-left: 1px; }
.col { display: flex; flex-direction: column; padding-top: 4px; flex: none; letter-spacing: -0.33px; }
.c1 { width: 122px; letter-spacing: -0.4px; } .c2 { width: 84px; } .c3 { width: 90px; }
.small { height: 21px; display: flex; align-items: center; }
.small svg { margin: -1px 1px 0 0; }
.small .drop { margin: 0 0 2px 1px; }
.g4 .big { padding-top: 6px; } .g4 svg { margin-bottom: 5px; } .g4 .big span { line-height: 11px; }
.m1 { width: 114px; } .m2 { width: 95px; } .m3 { width: 74px; } .m4 { width: 100px; }

.work { flex: 1; display: flex; min-height: 0; background: #eeeef0; border-top: 1px solid #c6c6ca; }
.left { width: 402px; flex: none; display: flex; flex-direction: column; }
.phead { height: 20px; flex: none; display: flex; align-items: center; background: #eeeef0; border: 1px solid #ccccda; border-bottom: 0; padding: 0 7px 1px 4px; color: #444; }
.phead span { margin-top: -1px; }
.grip { flex: 1; height: 5px; margin: 0 3px 0 4px; background-image: conic-gradient(from 0deg at 1px 1px, transparent 75%, #9a9a9a 0), conic-gradient(from 0deg at 1px 1px, transparent 75%, #9a9a9a 0); background-size: 4px 4px; background-position: 0 0, 2px 2px; }
.ptri { border: 4px solid transparent; border-top-color: #111; border-bottom: 0; margin: 2px 7px 0 0; }
.pin { margin-right: 6px; } .px { margin-right: 0; }
.pmax { width: 12px; height: 10px; border: 1px solid #1e1e3c; border-top-width: 2px; margin-right: 5px; margin-left: -1px; }
.outline { height: 300px; display: flex; flex-direction: column; flex: none; }
.panel { background: #fff; }
.ptool { height: 27px; flex: none; display: flex; background: #eeeef0; align-items: flex-start; padding: 2px 0 0 10px; }
.vgrip { width: 6px; height: 18px; margin: 3px 6px 0 0; background-image: conic-gradient(from 0deg at 1px 1px, transparent 75%, #aaa 0), conic-gradient(from 0deg at 1px 1px, transparent 75%, #aaa 0); background-size: 4px 4px; background-position: 0 0, 2px 2px; }
.combo { width: 100px; height: 23px; background: #fff; border: 1px solid #ccccda; display: flex; justify-content: space-between; align-items: center; padding: 0 4px 0 2px; }
.combo i { border: 4px solid transparent; border-top-color: #777; border-bottom: 0; }
.filter { width: 90px; height: 23px; background: #fff; border: 1px solid #ccccda; color: #9c9c9c; line-height: 21px; padding-left: 3px; overflow: hidden; }
.gold { margin: 7px 0 0 5px; }
.more { border: 3px solid transparent; border-top-color: #111; border-bottom: 0; margin: 15px 0 0 7px; }
.tree { position: relative; flex: 1; background: #fff; font-family: "DejaVu Sans Condensed", "DejaVu Sans", sans-serif; font-stretch: condensed; font-size: 11px; letter-spacing: -0.25px; color: #000; }
.lines { position: absolute; left: 0; top: 0; }
.node { height: 16px; position: relative; display: flex; align-items: center; }
.bold { font-weight: bold; letter-spacing: 0.15px; }
.lv0 { padding-left: 8px; }
.lv1 { padding-left: 8px; } .lv2 { padding-left: 35px; } .lv3 { padding-left: 62px; } .lv4 { padding-left: 89px; }
.box { width: 9px; height: 9px; margin-top: 1px; }
.stat { margin: 5px 0 0 10px; }
.nicon { margin: 0 4px 0 -1px; }
.lv0 .nicon { margin: 0 5px 0 0; }
.node span { line-height: 15px; } .node.bold span { margin-left: 1px; } .node.lv0 span { margin-left: 0; }
.sel { background: #f0f0f0; padding-right: 2px; }

.det { flex: 1; display: flex; flex-direction: column; }
.grid { color: #000; letter-spacing: -0.3px; }
.drow { display: flex; height: 18px; line-height: 16px; }
.gut { width: 13px; flex: none; background: #fff; padding: 5px 0 0 2px; }
.dh, .dn, .dv { border: 1px solid #a0a0a0; border-width: 1px 0 0 1px; padding-left: 3px; }
.dh { flex: 1; font-weight: bold; letter-spacing: -0.7px; border-right-width: 1px; }
.dn { width: 128px; flex: none; } .dv { flex: 1; background: #e8e7e3; border-right-width: 1px; }
.dv.edit { background: #fff; }
.drow:last-child { height: 19px; } .drow:last-child > div:not(.gut) { border-bottom: 1px solid #a0a0a0; }

.right { flex: 1; margin-left: 4px; display: flex; flex-direction: column; min-width: 0; }
.view { flex: 1; background: #fff; display: flex; overflow: hidden; justify-content: space-between; padding-left: 10px; min-height: 0; }
.doc { width: 700px; flex: none; color: #000; }
.dochead { height: 42px; display: flex; border-top: 1px solid #ddd; border-bottom: 2px solid #d8d8d8; padding-left: 7px; }
.dochead svg { margin-top: 8px; }
.dochead h1 { margin: 0 0 0 12px; font-weight: normal; font-size: 21px; line-height: 47px; height: 39px; flex: 1; letter-spacing: -0.4px; }
.dochead .lib { margin: 7px 9px 0 0; }
p { margin: 0; height: 44px; line-height: 17px; letter-spacing: -0.084px; }
h2 { margin: 0; height: 27px; background: #3b829b; color: #fff; font-weight: normal; font-size: 16.5px; line-height: 27px; display: flex; justify-content: space-between; padding: 0 5px 0 10px; letter-spacing: -0.6px; }
h2 svg { margin-top: 11px; }
.second { margin-top: 20px; }
.rows { border: 1px solid #dcdcdc; border-width: 1px 1px 0; }
.row { height: 24px; display: flex; border-bottom: 1px solid #dcdcdc; line-height: 23px; }
.pn { width: 449px; flex: none; border-right: 1px solid #dcdcdc; padding-left: 3px; display: flex; }
.pn svg { color: #7f7f7f; margin: 6px 0 0 0; }
.d1 { padding-left: 22px; } .d2 { padding-left: 41px; }
.pv { flex: 1; background: #e9e9e9; display: flex; }
b, em, strong { font: inherit; }
b { width: 120px; text-align: right; } em { padding-left: 10px; }
strong { flex: 1; text-align: center; }
.tall { height: 162px; line-height: 162px; } .plot { margin: 4px 0 0 25px; }
.tall .pn { letter-spacing: -0.2px; }
.scroll { width: 17px; margin-top: 40px; background: #f0f0f0; display: flex; flex-direction: column; align-items: center; }
.su { border: 4px solid transparent; border-bottom-color: #a0a0a0; border-top: 0; margin-top: 7px; }
.thumb { width: 13px; height: 261px; background: #c1c1c1; margin-top: 6px; }
.sd { border: 4px solid transparent; border-top-color: #555; border-bottom: 0; margin-top: auto; margin-bottom: 7px; }
.btabs { height: 19px; flex: none; display: flex; border-top: 1px solid #ccccda; color: #444; line-height: 16px; }
.bt { width: 67px; text-align: center; }
.bt.on { width: 192px; margin-top: -1px; height: 19px; background: #f7f7f9; border: 1px solid #ccccda; border-top: 0; color: #0f7acb; line-height: 18px; }

.status { height: 20px; flex: none; margin-bottom: 1px; display: flex; background: #007acc; color: #fff; line-height: 22px; padding-left: 8px; }
.ready { width: 724px; } .k1 { width: 112px; } .k2 { width: 98px; } .k3 { width: 185px; letter-spacing: 0.07px; } .k4 { width: 37px; } .k5 { width: 39px; }
.bubble { margin: 2px 1px 0 0; }
.tri { width: 0; height: 0; border: solid transparent; border-width: 0 5px 5px; border-bottom-color: #fff; margin: 7px 4px 0 0; }
</style>
